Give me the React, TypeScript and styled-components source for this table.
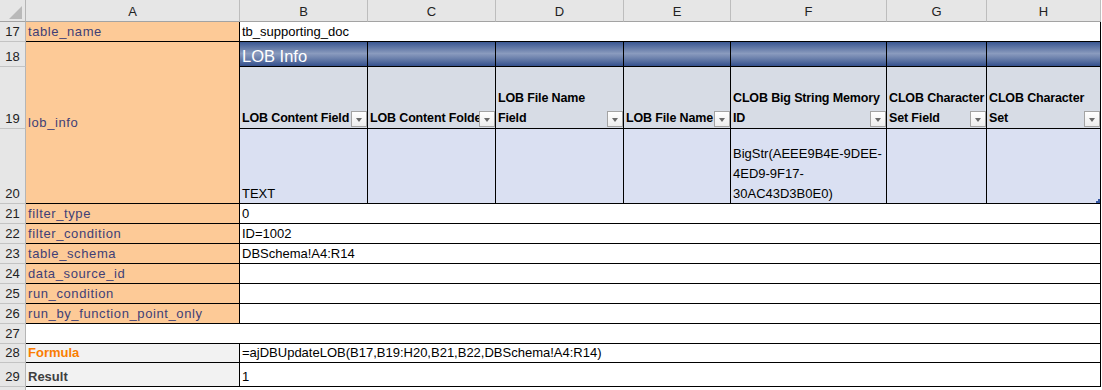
import styled, { createGlobalStyle, css } from "styled-components";

const GlobalStyle = createGlobalStyle`
  html, body {
    margin: 0;
    padding: 0;
    background: #fff;
  }
  body {
    font-family: "Liberation Sans", Arial, sans-serif;
  }
`;

// column widths include the 1px right border (row header, A..H)
const COLS = [26, 214, 128, 128, 128, 107, 156, 100, 114];
// header row, then sheet rows 17..30
const ROWS = [22, 20, 25, 62, 75, 20, 20, 20, 20, 20, 20, 20, 19, 24, 20];
const LETTERS = ["A", "B", "C", "D", "E", "F", "G", "H"];

type Kind = "input" | "plain" | "band" | "head" | "data" | "calc" | "output";

const kinds: Record<Kind, ReturnType<typeof css>> = {
    input: css`
        background: #fdca97;
        color: #3f3f76;
        letter-spacing: 0.6px;
    `,
    plain: css`
        background: #fff;
        color: #000;
    `,
    band: css`
        background: linear-gradient(to bottom, #3a5793 0%, #6c81ac 30%, #8a9bbe 48%, #6c81ac 68%, #34508d 100%);
        color: #fff;
        font-size: 16.5px;
        line-height: 22px;
    `,
    head: css`
        background: #d7dce5;
        color: #000;
        font-weight: 700;
        font-size: 12.5px;
        letter-spacing: -0.15px;
    `,
    data: css`
        background: #dae0f2;
        color: #000;
    `,
    calc: css`
        background: #f2f2f2;
        color: #fa7d00;
        font-weight: 700;
    `,
    output: css`
        background: #f2f2f2;
        color: #3f3f3f;
        font-weight: 700;
    `,
};

const Sheet = styled.div`
    display: grid;
    grid-template-columns: ${COLS.map((c) => `${c}px`).join(" ")};
    grid-template-rows: ${ROWS.map((r) => `${r}px`).join(" ")};
    width: 1102px;
    height: 390px;
    overflow: hidden;
    font-size: 13px;
`;

const Corner = styled.div`
    grid-column: 1;
    grid-row: 1;
    position: relative;
    background: #e6e6e6;
    box-sizing: border-box;
    border-right: 1px solid #b5b5b5;
    border-bottom: 1px solid #a3a3a3;

    &::after {
        content: "";
        position: absolute;
        left: 9px;
        top: 6px;
        width: 13px;
        height: 13px;
        background: #b9b9b9;
        clip-path: polygon(100% 0, 100% 100%, 0 100%);
    }
`;

const ColHead = styled.div<{ $col: number }>`
    grid-column: ${(p) => p.$col};
    grid-row: 1;
    box-sizing: border-box;
    display: flex;
    align-items: center;
    justify-content: center;
    background: #e6e6e6;
    color: #222;
    border-right: 1px solid #bdbdbd;
    border-bottom: 1px solid #a3a3a3;
    padding-top: 1px;
`;

const RowHead = styled.div<{ $row: number }>`
    grid-column: 1;
    grid-row: ${(p) => p.$row - 15};
    box-sizing: border-box;
    display: flex;
    align-items: flex-end;
    justify-content: center;
    background: #e6e6e6;
    color: #222;
    line-height: 20px;
    overflow: hidden;
    border-right: 1px solid #b5b5b5;
    border-bottom: 1px solid #c3c3c3;

    & > span {
        margin-bottom: -1px;
    }
`;

const Cell = styled.div<{
    $col: number;
    $row: number;
    $span?: number;
    $rows?: number;
    $kind?: Kind;
    $middle?: boolean;
}>`
    grid-column: ${(p) => p.$col} / span ${(p) => p.$span ?? 1};
    grid-row: ${(p) => p.$row - 15} / span ${(p) => p.$rows ?? 1};
    position: relative;
    box-sizing: border-box;
    display: flex;
    flex-direction: column;
    justify-content: ${(p) => (p.$middle ? "center" : "flex-end")};
    padding: 0 2px;
    border-right: 1px solid #000;
    border-bottom: 1px solid #000;
    line-height: 20px;
    white-space: nowrap;
    overflow: hidden;
    ${(p) => kinds[p.$kind ?? "plain"]}
`;

const Text = styled.span`
    display: block;

    &:last-of-type {
        margin-bottom: -1px;
    }
`;

const FilterButton = styled.span`
    position: absolute;
    right: 0;
    bottom: 1px;
    width: 16px;
    height: 16px;
    box-sizing: border-box;
    border: 1px solid #a4a4a4;
    background: linear-gradient(to bottom, #ffffff, #ededed);
    display: flex;
    align-items: center;
    justify-content: center;

    &::after {
        content: "";
        border-left: 3.5px solid transparent;
        border-right: 3.5px solid transparent;
        border-top: 4px solid #6a6a6a;
        margin-top: 1px;
    }
`;

const ResizeHandle = styled.span`
    position: absolute;
    right: 0;
    bottom: 0;
    width: 4px;
    height: 4px;
    background: #3557a3;
    clip-path: polygon(100% 0, 100% 100%, 0 100%, 0 50%, 50% 50%, 50% 0);
`;

const headers: { col: number; lines: string[] }[] = [
    { col: 3, lines: ["LOB Content Field"] },
    { col: 4, lines: ["LOB Content Folder Field"] },
    { col: 5, lines: ["LOB File Name", "Field"] },
    { col: 6, lines: ["LOB File Name Field"] },
    { col: 7, lines: ["CLOB Big String Memory", "ID"] },
    { col: 8, lines: ["CLOB Character", "Set Field"] },
    { col: 9, lines: ["CLOB Character", "Set"] },
];

const params: { row: number; label: string; value: string }[] = [
    { row: 21, label: "filter_type", value: "0" },
    { row: 22, label: "filter_condition", value: "ID=1002" },
    { row: 23, label: "table_schema", value: "DBSchema!A4:R14" },
    { row: 24, label: "data_source_id", value: "" },
    { row: 25, label: "run_condition", value: "" },
    { row: 26, label: "run_by_function_point_only", value: "" },
];

export default function App() {
    return (
        <>
            <GlobalStyle />
            <Sheet>
                <Corner />
                {LETTERS.map((l, i) => (
                    <ColHead key={l} $col={i + 2}>
                        {l}
                    </ColHead>
                ))}
                {Array.from({ length: 14 }, (_, i) => (
                    <RowHead key={i} $row={17 + i}>
                        {i < 13 && <span>{17 + i}</span>}
                    </RowHead>
                ))}

                <Cell $col={2} $row={17} $kind="input">
                    <Text>table_name</Text>
                </Cell>
                <Cell $col={3} $row={17} $span={7}>
                    <Text>tb_supporting_doc</Text>
                </Cell>

                <Cell $col={2} $row={18} $rows={3} $kind="input" $middle>
                    <Text>lob_info</Text>
                </Cell>
                {[3, 4, 5, 6, 7, 8, 9].map((c) => (
                    <Cell key={`band${c}`} $col={c} $row={18} $kind="band">
                        <Text>{c === 3 ? "LOB Info" : ""}</Text>
                    </Cell>
                ))}
                {headers.map((h) => (
                    <Cell key={`head${h.col}`} $col={h.col} $row={19} $kind="head">
                        {h.lines.map((line) => (
                            <Text key={line}>{line}</Text>
                        ))}
                        <FilterButton />
                    </Cell>
                ))}
                {[3, 4, 5, 6, 7, 8, 9].map((c) => (
                    <Cell key={`data${c}`} $col={c} $row={20} $kind="data">
                        {c === 3 && <Text>TEXT</Text>}
                        {c === 7 && (
                            <>
                                <Text>BigStr(AEEE9B4E-9DEE-</Text>
                                <Text>4ED9-9F17-</Text>
                                <Text>30AC43D3B0E0)</Text>
                            </>
                        )}
                        {c === 9 && <ResizeHandle />}
                    </Cell>
                ))}

                {params.map((p) => [
                    <Cell key={`l${p.row}`} $col={2} $row={p.row} $kind="input">
                        <Text>{p.label}</Text>
                    </Cell>,
                    <Cell key={`v${p.row}`} $col={3} $row={p.row} $span={7}>
                        <Text>{p.value}</Text>
                    </Cell>,
                ])}

                <Cell $col={2} $row={27} $span={8} />

                <Cell $col={2} $row={28} $kind="calc">
                    <Text>Formula</Text>
                </Cell>
                <Cell $col={3} $row={28} $span={7}>
                    <Text>=ajDBUpdateLOB(B17,B19:H20,B21,B22,DBSchema!A4:R14)</Text>
                </Cell>

                <Cell $col={2} $row={29} $kind="output">
                    <Text>Result</Text>
                </Cell>
                <Cell $col={3} $row={29} $span={7}>
                    <Text>1</Text>
                </Cell>
            </Sheet>
        </>
    );
}
